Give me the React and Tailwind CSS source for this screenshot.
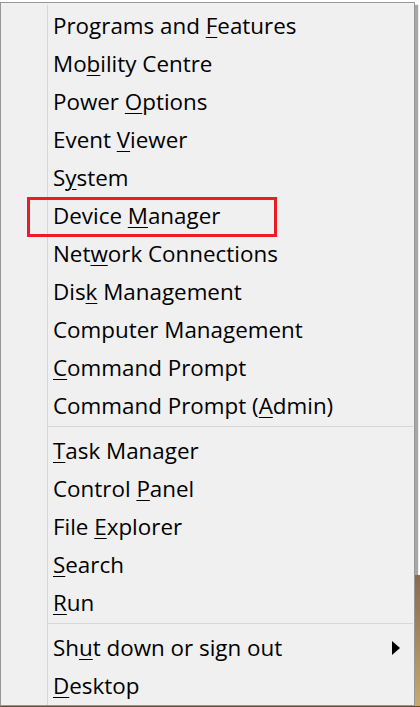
import React from "react";

// each entry: [before, key, after]
const groupOne = [
  ["Programs and ", "F", "eatures"],
  ["Mo", "b", "ility Centre"],
  ["Power ", "O", "ptions"],
  ["Event ", "V", "iewer"],
  ["S", "y", "stem"],
  ["Device ", "M", "anager"],
  ["Net", "w", "ork Connections"],
  ["Dis", "k", " Management"],
  ["Computer Mana", "g", "ement"],
  ["", "C", "ommand Prompt"],
  ["Command Prompt (", "A", "dmin)"],
];

const groupTwo = [
  ["", "T", "ask Manager"],
  ["Control ", "P", "anel"],
  ["File ", "E", "xplorer"],
  ["", "S", "earch"],
  ["", "R", "un"],
];

function Item({ label, submenu }) {
  const [before, key, after] = label;
  return (
    <div className="h-[38px] flex items-center justify-between pl-[5px] pr-[14px]">
      <span className="text-[22.4px] leading-none text-black whitespace-nowrap">
        {before}
        <span className="underline underline-offset-[3px] decoration-1">{key}</span>
        {after}
      </span>
      {submenu && (
        <svg width="8" height="14" viewBox="0 0 8 14">
          <path d="M0 0 L8 7 L0 14 Z" fill="#000" />
        </svg>
      )}
    </div>
  );
}

function Separator() {
  return (
    <div className="h-[7px] pt-[1px] pr-[1px]">
      <div className="h-px bg-[#d7d7d7]" />
    </div>
  );
}

export default function App() {
  return (
    <div
      className="relative w-[420px] h-[707px] bg-white flex flex-col overflow-hidden"
      style={{ fontFamily: "'Open Sans', 'Noto Sans', sans-serif" }}
    >
      <div className="flex flex-1 pt-[2px]">
        {/* ------------------ MENU ------------------ */}
        <div className="w-[415px] h-[704px] border border-[#979797] bg-[#f0f0f0] shadow-[3px_3px_1px_rgba(0,0,0,0.35)] pt-[2px]">
          <div className="ml-[46px] border-l border-[#d7d7d7] pt-[2px]">
            {groupOne.map((l) => (
              <Item key={l.join("")} label={l} />
            ))}
            <Separator />
            {groupTwo.map((l) => (
              <Item key={l.join("")} label={l} />
            ))}
            <Separator />
            <Item label={["Sh", "u", "t down or sign out"]} submenu />
            <Item label={["", "D", "esktop"]} />
          </div>
        </div>
        {/* desktop peeking out on the right */}
        <div className="flex-1 flex flex-col">
          <div className="h-[573px]" />
          <div className="flex-1 bg-gradient-to-b from-[#8a6a4e] to-[#c9a96a]" />
        </div>
      </div>
      <div className="h-[1px] bg-[#6b4a2a]" />

      {/* red highlight annotation */}
      <div className="absolute left-[27px] top-[197px] w-[250px] h-[40px] border-[3px] border-[#ec1c24]" />
    </div>
  );
}
